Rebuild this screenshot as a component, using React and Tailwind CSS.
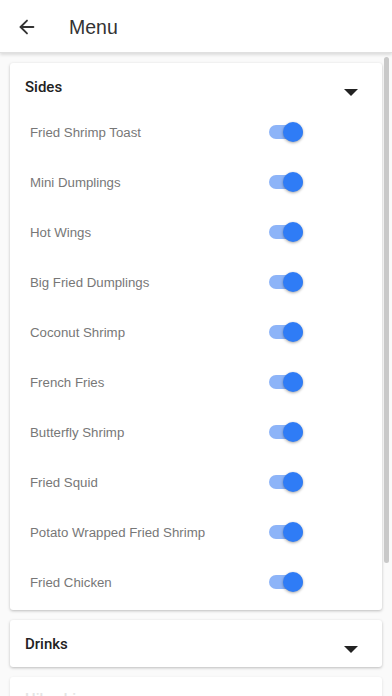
import { ArrowLeft } from 'lucide-react';

const sides = [
  'Fried Shrimp Toast',
  'Mini Dumplings',
  'Hot Wings',
  'Big Fried Dumplings',
  'Coconut Shrimp',
  'French Fries',
  'Butterfly Shrimp',
  'Fried Squid',
  'Potato Wrapped Fried Shrimp',
  'Fried Chicken',
];

function Caret() {
  return (
    <svg width="14" height="8" viewBox="0 0 14 8" className="block">
      <path d="M0 0 L14 0 L7 7 Z" fill="#222" />
    </svg>
  );
}

function Toggle() {
  return (
    <div className="relative w-[34px] h-[20px] flex items-center">
      <div className="w-[34px] h-[14px] rounded-full bg-[#8db4f8]" />
      <div className="absolute right-0 top-0 w-[20px] h-[20px] rounded-full bg-[#2f7cf6] shadow-[0_1px_3px_rgba(0,0,0,0.35)]" />
    </div>
  );
}

export default function App() {
  return (
    <div className="relative h-[696px] w-[392px] overflow-hidden bg-[#fafafa] font-['Liberation_Sans',Arial,sans-serif]">
      <header className="h-[53px] bg-white flex items-center shadow-[0_2px_3px_rgba(0,0,0,0.12)] border-b border-[#e0e0e0] relative z-10">
        <ArrowLeft className="ml-[16px] mt-[2px] w-[22px] h-[22px] text-[#333]" strokeWidth={2} />
        <h1 className="ml-[31px] mt-[3px] text-[19.5px] text-[#333]">Menu</h1>
      </header>

      <div className="px-[10px] pt-[10px] flex flex-col gap-[10px]">
        <section className="bg-white rounded-[3px] shadow-[0_1px_3px_rgba(0,0,0,0.25)] pb-[3px]">
          <div className="h-[44px] flex justify-between pl-[15px] pr-[24px]">
            <span className="mt-[14px] text-[15px] font-medium text-[#222] leading-[20px] font-['Roboto',sans-serif]">Sides</span>
            <div className="mt-[26px]"><Caret /></div>
          </div>
          {sides.map((name) => (
            <div key={name} className="h-[50px] flex items-center pl-[20px]">
              <span className="w-[239px] mt-[2px] text-[13.25px] text-[#777]">{name}</span>
              <Toggle />
            </div>
          ))}
        </section>

        <section className="bg-white rounded-[3px] shadow-[0_1px_3px_rgba(0,0,0,0.25)] h-[47px] flex justify-between pl-[15px] pr-[24px]">
          <span className="mt-[14px] text-[15px] font-medium text-[#222] leading-[20px] font-['Roboto',sans-serif]">Drinks</span>
          <div className="mt-[26px]"><Caret /></div>
        </section>

        <section className="bg-white rounded-[3px] shadow-[0_1px_3px_rgba(0,0,0,0.12)] h-[47px] flex pl-[15px]">
          <span className="mt-[12px] text-[15px] font-medium text-[#e4e4e4] leading-[20px] font-['Roboto',sans-serif]">Hibachi</span>
        </section>
      </div>

      <div className="absolute left-[384px] top-[57px] w-[5px] h-[506px] rounded-full bg-[#c9c9c9]" />
    </div>
  );
}
